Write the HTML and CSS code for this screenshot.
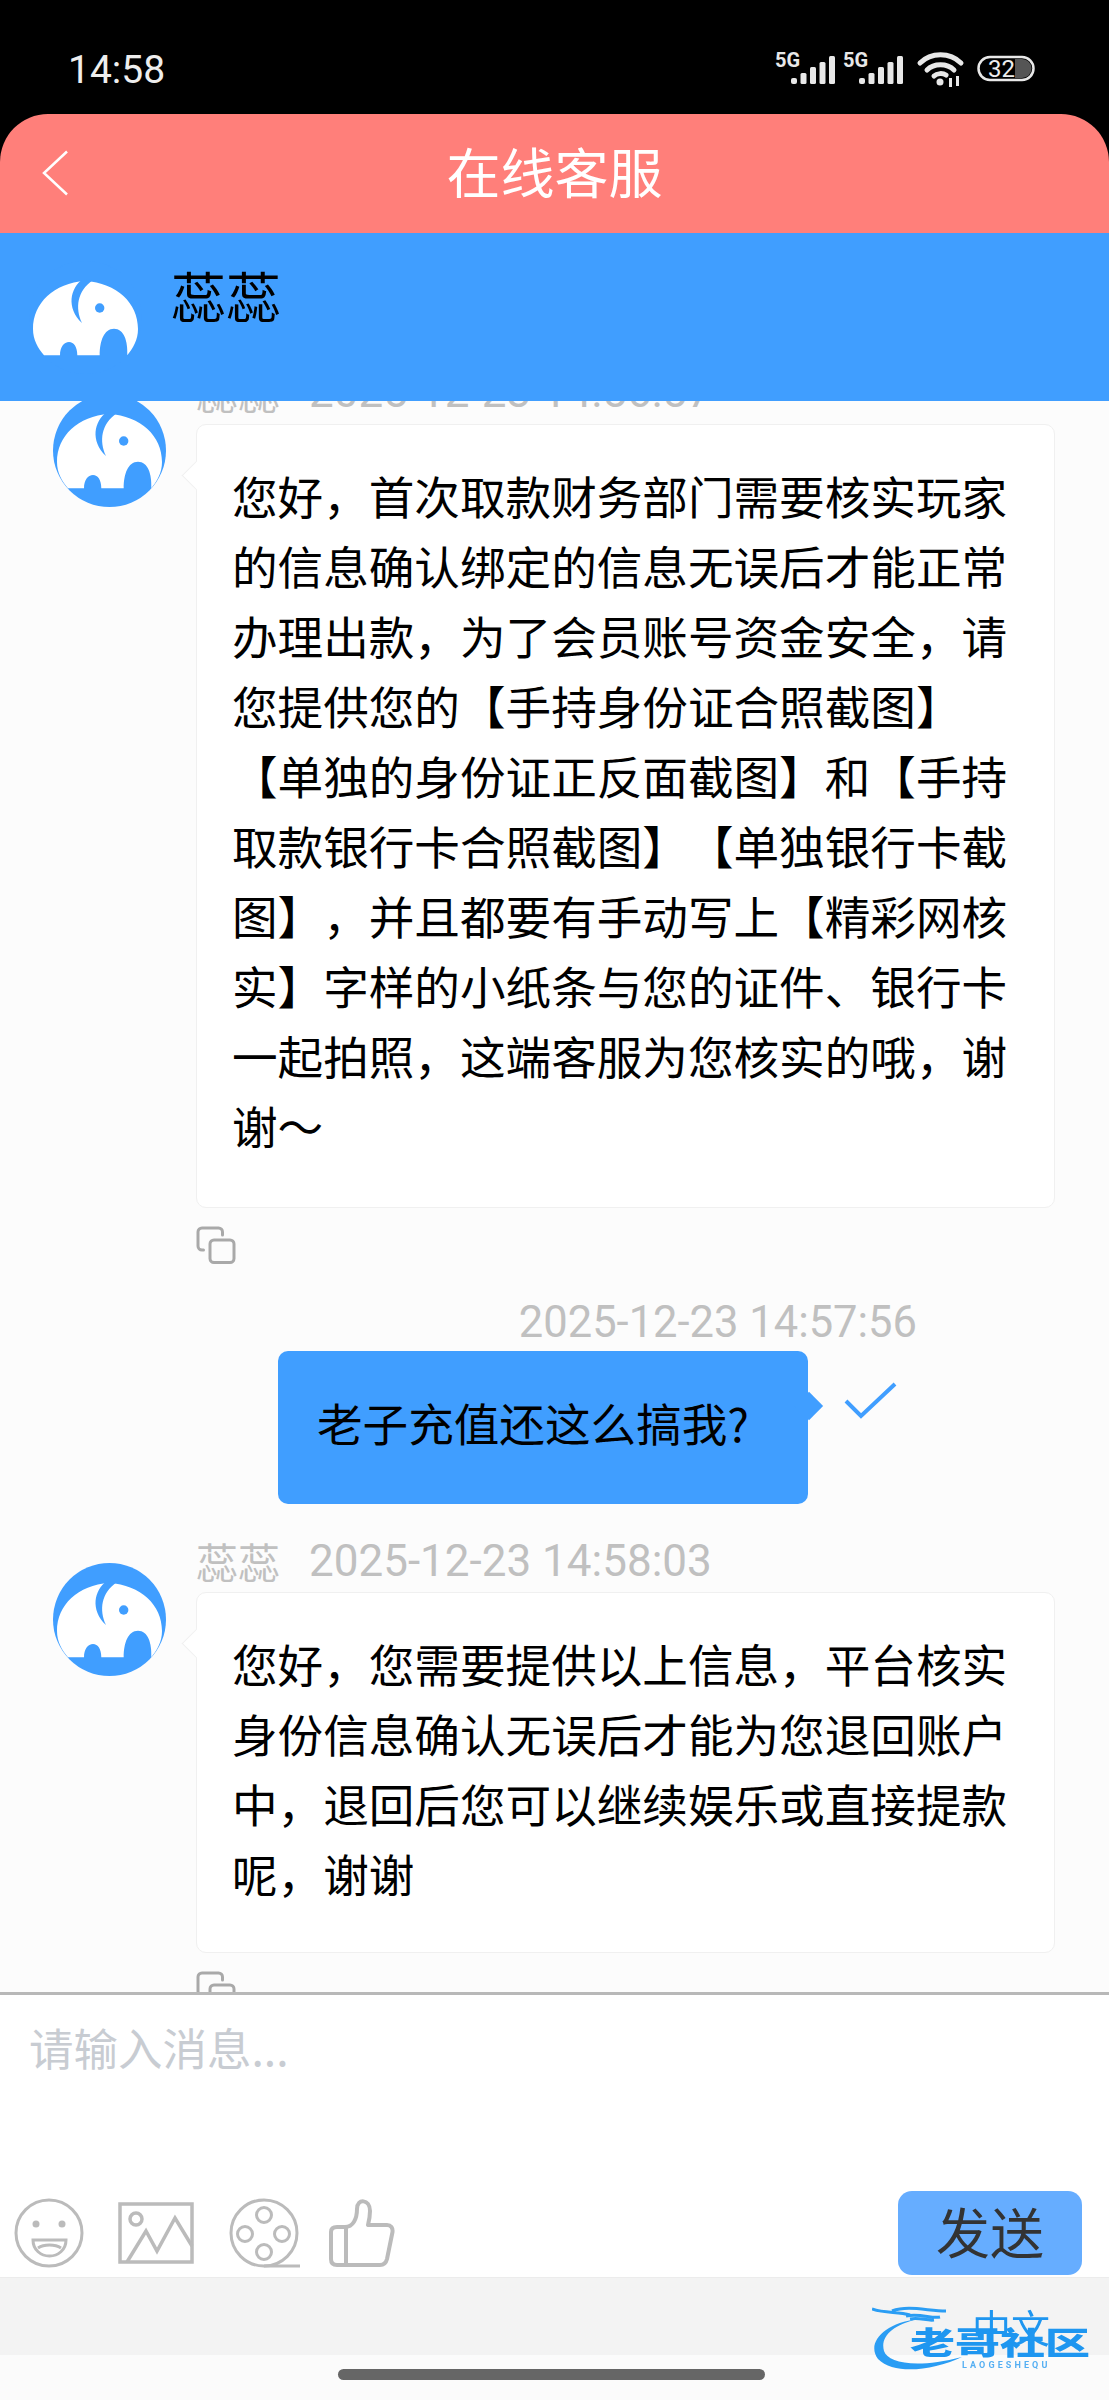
FILE: index.html
```html
<!DOCTYPE html>
<html lang="zh-CN">
<head>
<meta charset="utf-8">
<title>在线客服</title>
<link rel="stylesheet" href="styles.css">
</head>
<body>
<svg class="defs" width="0" height="0" aria-hidden="true">
  <symbol id="elephant" viewBox="0 0 113 113">
    <circle cx="56.5" cy="56.5" r="56.5" fill="#409eff"/>
    <path fill="#fff" d="M15 94.3C9 87 4 79 4 68C4 42 25 22 56 20C88 22 109 42 109 68C109 79 104 87 98.3 94.3C99 80 95 67.7 85 67.7C75 67.7 70.7 80 70.7 94.3L48.3 94.3C48.3 86 45 81 40 81C35 81 31 86 31 94.3Z"/>
    <path fill="#409eff" d="M54 18C41 27 37 47 53 62C46 47 48 30 64 19Z"/>
    <circle cx="70.7" cy="47" r="4.7" fill="#409eff"/>
  </symbol>
  <symbol id="copy" viewBox="0 0 40 38">
    <path fill="none" stroke="#a9a9a9" stroke-width="3" stroke-linecap="round" d="M26.500 9V6a4 4 0 0 0-4-4H6a4 4 0 0 0-4 4V20a4 4 0 0 0 4 4h1.500"/>
    <rect x="14" y="14" width="24" height="22.500" rx="4" fill="none" stroke="#a9a9a9" stroke-width="3"/>
  </symbol>
</svg>
<div class="phone">
  <header class="statusbar">
    <span class="clock">14:58</span>
    <svg class="status-icons" width="260" height="48" viewBox="0 -6 260 48">
      <text class="sig-label" x="0" y="15">5G</text>
      <g fill="#e8e8e8">
        <rect x="16" y="26" width="6" height="6" rx="2"/><rect x="25.500" y="21" width="6" height="11" rx="1.500"/><rect x="35" y="15" width="6" height="17" rx="1.500"/><rect x="44.500" y="10" width="6" height="22" rx="1.500"/><rect x="54" y="4" width="6" height="28" rx="1.500"/>
      </g>
      <text class="sig-label" x="68" y="15">5G</text>
      <g fill="#e8e8e8">
        <rect x="84" y="26" width="6" height="6" rx="2"/><rect x="93.500" y="21" width="6" height="11" rx="1.500"/><rect x="103" y="15" width="6" height="17" rx="1.500"/><rect x="112.500" y="10" width="6" height="22" rx="1.500"/><rect x="122" y="4" width="6" height="28" rx="1.500"/>
      </g>
      <g fill="none" stroke="#e8e8e8" stroke-width="5" stroke-linecap="round">
        <path d="M145 11C156 0 175 0 186 11"/>
        <path d="M152 18C159 11 172 11 179 18"/>
        <path d="M159 24C162 21 168 21 171 23"/>
      </g>
      <circle cx="165" cy="30" r="3.500" fill="#e8e8e8"/>
      <g fill="#e8e8e8"><rect x="174" y="26" width="3" height="9"/><rect x="181" y="24" width="3" height="10"/></g>
      <rect x="203.500" y="5" width="55" height="23" rx="11.500" fill="none" stroke="#e8e8e8" stroke-width="2.500"/>
      <path d="M240 7h7a9.500 9.500 0 0 1 0 19h-7z" fill="#555"/>
      <text class="batt-label" x="213" y="25">32</text>
    </svg>
  </header>

  <nav class="titlebar">
    <svg class="back" width="26" height="46" viewBox="0 0 26 46"><path d="M25 1.500L2 23L25 44.500" fill="none" stroke="#fff" stroke-width="2.500"/></svg>
    <h1 class="title">在线客服</h1>
    <span></span>
  </nav>

  <section class="agent">
    <svg class="avatar"><use href="#elephant"/></svg>
    <div class="agent-name">蕊蕊</div>
  </section>

  <main class="chat">
    <article class="msg">
      <svg class="avatar msg-avatar"><use href="#elephant"/></svg>
      <div class="msg-body">
        <div class="meta"><span class="meta-name">蕊蕊</span><span class="meta-time">2025-12-23 14:56:57</span></div>
        <div class="bubble">您好，首次取款财务部门需要核实玩家的信息确认绑定的信息无误后才能正常办理出款，为了会员账号资金安全，请您提供您的【手持身份证合照截图】【单独的身份证正反面截图】和【手持取款银行卡合照截图】【单独银行卡截图】，并且都要有手动写上【精彩网核实】字样的小纸条与您的证件、银行卡一起拍照，这端客服为您核实的哦，谢谢～</div>
        <svg class="copy"><use href="#copy"/></svg>
      </div>
    </article>

    <article class="mine">
      <div class="mine-time">2025-12-23 14:57:56</div>
      <div class="mine-row">
        <div class="mine-bubble">老子充值还这么搞我?</div>
        <svg class="check" width="53" height="37" viewBox="0 0 53 37"><path d="M2 19L17 34L51 2" fill="none" stroke="#409eff" stroke-width="4"/></svg>
      </div>
    </article>

    <article class="msg msg-last">
      <svg class="avatar msg-avatar"><use href="#elephant"/></svg>
      <div class="msg-body">
        <div class="meta"><span class="meta-name">蕊蕊</span><span class="meta-time">2025-12-23 14:58:03</span></div>
        <div class="bubble">您好，您需要提供以上信息，平台核实身份信息确认无误后才能为您退回账户中，退回后您可以继续娱乐或直接提款呢，谢谢</div>
        <svg class="copy"><use href="#copy"/></svg>
      </div>
    </article>
  </main>

  <section class="composer">
    <div class="placeholder">请输入消息...</div>
    <div class="toolbar">
      <svg class="tool tool-face" width="70" height="70" viewBox="0 0 70 70" fill="none" stroke="#bbb" stroke-width="3">
        <circle cx="35" cy="35" r="33"/>
        <circle cx="22" cy="26" r="3.500" fill="#bbb" stroke="none"/><circle cx="48" cy="26" r="3.500" fill="#bbb" stroke="none"/>
        <path d="M19 42H52C52 52 44 58 35.500 58C27 58 19 52 19 42Z"/>
        <path d="M24 50C30 46 41 46 47 50"/>
      </svg>
      <svg class="tool tool-image" width="76" height="62" viewBox="0 0 76 62" fill="none" stroke="#bbb" stroke-width="3.500">
        <rect x="2" y="2" width="72" height="58"/>
        <circle cx="18" cy="17" r="6"/>
        <path d="M9 60L28 29L39 49L57 16L74 44"/>
      </svg>
      <svg class="tool tool-reel" width="71" height="70" viewBox="0 0 71 70" fill="none" stroke="#bbb" stroke-width="3">
        <circle cx="35" cy="35" r="33"/>
        <circle cx="35" cy="17" r="7.500"/><circle cx="35" cy="54" r="7.500"/><circle cx="16" cy="36" r="7.500"/><circle cx="53" cy="36" r="7.500"/>
        <path d="M35 68H71"/>
      </svg>
      <svg class="tool tool-thumb" width="66" height="68" viewBox="0 0 66 68" fill="none" stroke="#bbb" stroke-width="4">
        <path d="M16 28C24 28 28 20 28 10C28 -1 41 0 41 12C41 17 40 22 39 26H58C62 26 64 29 63.500 33L58 60C57 64 55 66 51 66H8C4 66 2 64 2 60V33C2 30 4 28 8 28Z" stroke-linejoin="round"/>
        <path d="M17 28V66"/>
      </svg>
      <button class="send">发送</button>
    </div>
  </section>

  <div class="graybar"></div>
  <div class="homebar"><span class="indicator"></span></div>

  <div class="watermark">
    <svg class="wm-dragon" width="100" height="68" viewBox="0 0 100 68">
      <path fill="#2a9df4" d="M46 14C20 20 8 32 12 46C16 58 44 64 90 52C60 66 22 70 6 54C-6 38 12 18 46 14Z"/>
      <path d="M0 4C14 9 26 6 38 10M20 6C36 0 56 6 74 6M34 11C48 8 60 14 68 12M38 14C48 12 54 16 62 15" fill="none" stroke="#2a9df4" stroke-width="3"/>
    </svg>
    <span class="wm-main">老哥社区</span>
    <span class="wm-sub">LAOGESHEQU</span>
    <span class="wm-lang">中文</span>
  </div>
</div>
</body>
</html>
```

FILE: styles.css
```css
* { box-sizing: border-box; }
html, body { margin: 0; padding: 0; background: #000; }
.defs { position: absolute; }
.phone {
  position: relative;
  width: 1109px;
  height: 2400px;
  display: flex;
  flex-direction: column;
  overflow: hidden;
  background: #000;
  font-family: "Noto Sans CJK SC", "Noto Sans", sans-serif;
  color: #000;
  text-spacing-trim: space-all;
}
.statusbar {
  flex: 0 0 114px;
  display: flex;
  justify-content: space-between;
  align-items: center;
  padding: 26px 74px 0 68px;
  background: #000;
}
.clock { font: 400 39px/1 Roboto, sans-serif; color: #eee; }
.status-icons { display: block; }
.sig-label { font: 700 20px Roboto, sans-serif; fill: #e8e8e8; }
.batt-label { font: 400 24px Roboto, sans-serif; fill: #eee; }

.titlebar {
  flex: 0 0 119px;
  display: grid;
  grid-template-columns: 1fr auto 1fr;
  align-items: center;
  padding-left: 42px;
  background: #ff7f7a;
  border-radius: 48px 48px 0 0;
}
.back { display: block; margin-top: -2px; }
.title {
  margin: -6px 0 0 -42px;
  font-size: 54px;
  font-weight: 400;
  line-height: 70px;
  color: #fff;
}

.agent {
  flex: 0 0 168px;
  display: flex;
  align-items: flex-start;
  gap: 29px;
  padding: 28px 0 0 29px;
  background: #409eff;
}
.avatar { display: block; flex: none; width: 113px; height: 113px; }
.agent-name { margin-top: -2px; font-size: 55px; line-height: 70px; }

.chat {
  flex: 0 0 1591px;
  overflow: hidden;
  background: #fcfcfc;
}
.msg {
  display: flex;
  align-items: flex-start;
  gap: 30px;
  padding-left: 53px;
  margin-top: -33px;
}
.msg-avatar { margin-top: 26px; }
.msg-body { width: 859px; }
.meta { display: flex; align-items: center; height: 48px; color: #c0c0c0; }
.meta-name { width: 113px; font-size: 42px; line-height: 48px; }
.meta-time { font: 400 44px/48px Roboto, sans-serif; color: #c0c0c0; }
.mine-time { font: 400 43.500px/48px Roboto, sans-serif; color: #c0c0c0; }
.bubble {
  position: relative;
  margin-top: 8px;
  padding: 35px 36px 47px 35px;
  background: #fff;
  border: 1px solid #f0f0f0;
  border-radius: 10px;
  font-size: 45.600px;
  line-height: 70px;
}
.bubble::before {
  content: "";
  position: absolute;
  left: -11px;
  top: 40px;
  width: 20px;
  height: 20px;
  background: #fff;
  border-left: 1px solid #f0f0f0;
  border-bottom: 1px solid #f0f0f0;
  transform: rotate(45deg);
}
.copy { display: block; width: 40px; height: 38px; margin-top: 18px; }
.mine { margin-top: 35px; }
.mine-time { padding-right: 192px; text-align: right; }
.mine-row {
  display: flex;
  align-items: center;
  margin-top: 4px;
  padding-left: 278px;
}
.mine-bubble {
  position: relative;
  width: 530px;
  height: 153px;
  padding: 36px 39px;
  background: #409eff;
  border-radius: 10px;
  font-size: 45.600px;
  line-height: 70px;
}
.mine-bubble::after {
  content: "";
  position: absolute;
  right: -11px;
  top: 45px;
  width: 20px;
  height: 20px;
  background: #409eff;
  transform: rotate(45deg);
}
.check { display: block; margin: -54px 0 0 36px; }
.msg-last { margin-top: 33px; }
.msg-last .bubble { margin-top: 7px; padding-bottom: 44px; }

.composer {
  flex: 0 0 285px;
  display: flex;
  flex-direction: column;
  background: #fff;
  border-top: 3px solid #b8b8b8;
}
.placeholder {
  flex: 0 0 196px;
  padding: 22px 0 0 29px;
  font-size: 44.500px;
  line-height: 60px;
  color: #c8ccd2;
}
.toolbar {
  display: flex;
  align-items: center;
  height: 84px;
  padding: 0 27px 0 14px;
}
.tool { display: block; flex: none; }
.tool-image { margin-left: 34px; }
.tool-reel { margin-left: 35px; }
.tool-thumb { margin-left: 29px; }
.send {
  margin-left: auto;
  width: 184px;
  height: 84px;
  padding: 0 0 5px;
  border: 0;
  border-radius: 14px;
  background: #66adff;
  color: #333;
  font-family: inherit;
  font-size: 54px;
}
.graybar {
  flex: 0 0 78px;
  background: #f3f3f3;
  border-top: 1px solid #ececec;
}
.homebar {
  flex: 1;
  padding: 14px 0 0 338px;
  background: #fbfbfb;
}
.indicator {
  display: block;
  width: 427px;
  height: 11px;
  border-radius: 6px;
  background: #666;
}
.watermark {
  position: absolute;
  left: 872px;
  top: 2305px;
  width: 230px;
  height: 68px;
  filter: blur(0.7px);
  color: #1e96f0;
}
.wm-dragon { position: absolute; left: 0; top: 0; }
.wm-main {
  position: absolute;
  left: 38px;
  top: 6px;
  font-size: 45px;
  font-weight: 900;
  line-height: 60px;
  white-space: nowrap;
  transform: scaleY(0.68);
}
.wm-sub {
  position: absolute;
  left: 90px;
  top: 54px;
  font: 700 9px/12px Roboto, sans-serif;
  letter-spacing: 3.100px;
  opacity: 0.75;
}
.wm-lang {
  position: absolute;
  left: 100px;
  top: -4px;
  font-size: 39px;
  line-height: 50px;
  white-space: nowrap;
}
```
